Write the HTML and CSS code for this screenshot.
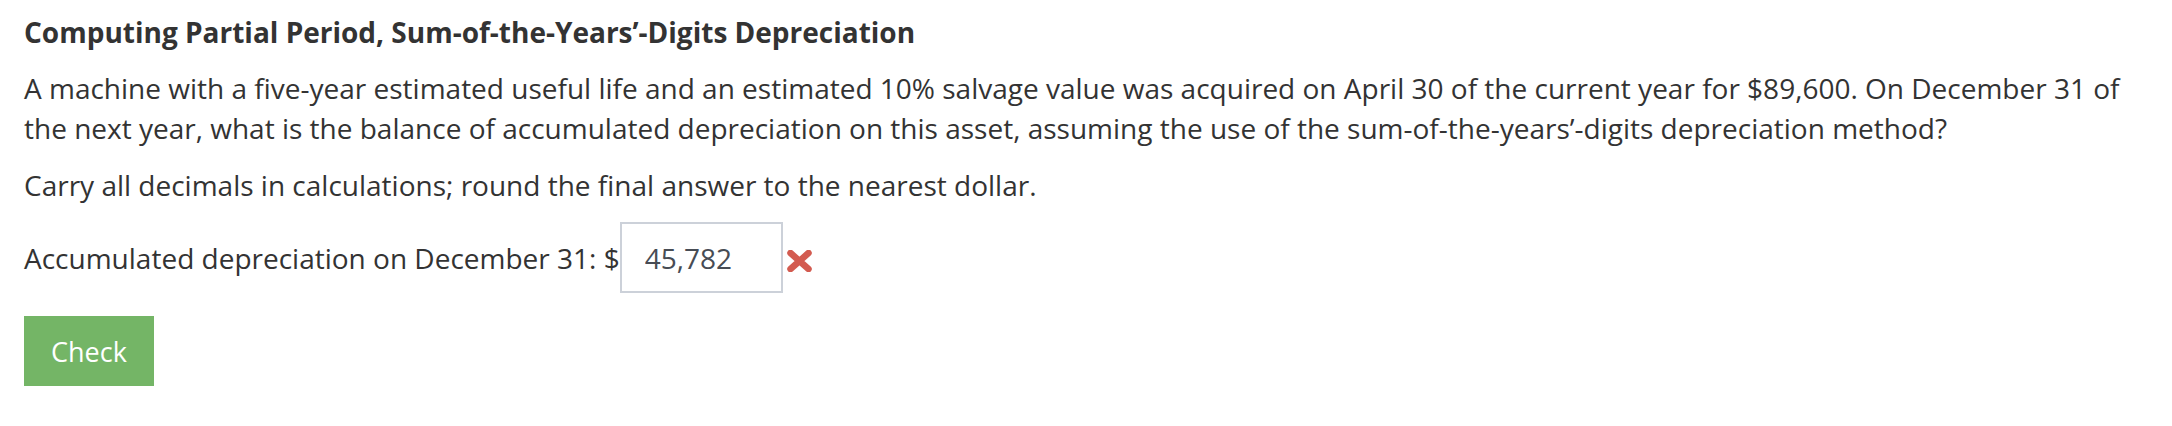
FILE: index.html
```html
<!DOCTYPE html>
<html lang="en">
<head>
    <meta charset="UTF-8">
    <meta name="viewport" content="width=device-width, initial-scale=1.0">
    <title>Computing Partial Period, Sum-of-the-Years'-Digits Depreciation</title>
    <link rel="stylesheet" href="styles.css">
</head>
<body>
    <div class="question">
        <h3 class="question-title">Computing Partial Period, Sum-of-the-Years’-Digits Depreciation</h3>
        <p>A machine with a five-year estimated useful life and an estimated 10% salvage value was acquired on April 30 of the current year for $89,600. On December 31 of the next year, what is the balance of accumulated depreciation on this asset, assuming the use of the sum-of-the-years’-digits depreciation method?</p>
        <p>Carry all decimals in calculations; round the final answer to the nearest dollar.</p>

        <div class="answer-row">
            <label for="answer">Accumulated depreciation on December 31: $</label>
            <input type="text" id="answer" class="answer-input" value="45,782">
            <!-- wrong answer mark -->
            <svg class="mark-wrong" width="25" height="22" viewBox="0 0 25 22" aria-hidden="true">
                <path d="M3.5 3 L21.5 19 M21.5 3 L3.5 19" stroke="#d35b50" stroke-width="6.5" stroke-linecap="round"/>
            </svg>
        </div>

        <button class="button" id="check">Check</button>
    </div>
</body>
</html>
```

FILE: styles.css
```css
body {
    font-family: "Open Sans", "Liberation Sans", sans-serif;
    margin: 0;
    padding: 0;
    background-color: #fff;
    color: #333;
}
.question {
    padding: 12px 24px;
}
.question-title {
    font-size: 28px;
    font-weight: bold;
    line-height: 40px;
    margin: 0 0 16px;
    color: #333;
}
.question p {
    font-size: 28px;
    line-height: 40px;
    margin: 0 0 17px;
}
.answer-row {
    display: flex;
    align-items: center;
    height: 71px;
    margin-top: 16px;
    font-size: 28px;
    line-height: 40px;
}
.answer-input {
    box-sizing: border-box;
    width: 163px;
    height: 71px;
    margin-left: 0;
    padding: 0 0 0 23px;
    border: 2px solid #ccd1d9;
    font-family: inherit;
    font-size: 28px;
    color: #474c54;
    background-color: #fff;
    outline: none;
}
.mark-wrong {
    margin-left: 4px;
    margin-top: 7px;
}
.button {
    display: block;
    margin-top: 23px;
    height: 70px;
    padding: 0 27px;
    background-color: #74b566;
    color: #fff;
    border: none;
    font-family: inherit;
    font-size: 27px;
    cursor: pointer;
}
.button:hover {
    background-color: #68a85a;
}
```
